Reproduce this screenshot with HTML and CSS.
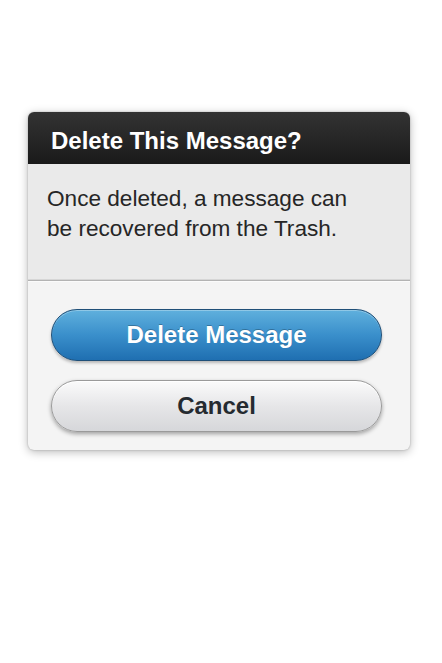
FILE: index.html
```html
<!DOCTYPE html>
<html>
<head>
<meta charset="utf-8">
<link rel="stylesheet" href="styles.css">
</head>
<body>
<div class="dialog">
  <div class="dialog-header">Delete This Message?</div>
  <div class="dialog-body">Once deleted, a message can be recovered from the Trash.</div>
  <div class="dialog-footer">
    <button class="btn btn-primary">Delete Message</button>
    <button class="btn btn-cancel">Cancel</button>
  </div>
</div>
</body>
</html>
```
FILE: styles.css
```css
html, body {
  margin: 0;
  padding: 0;
  background: #ffffff;
  width: 442px;
  height: 663px;
}
body {
  font-family: "Liberation Sans", Arial, sans-serif;
  padding-top: 112px;
  box-sizing: border-box;
}
.dialog {
  margin-left: 28px;
  width: 382px;
  border-radius: 6px;
  overflow: hidden;
  box-shadow: 0 2px 10px rgba(0,0,0,0.28), 0 0 2px rgba(0,0,0,0.25);
  background: #f4f4f4;
}
.dialog-header {
  height: 46px;
  padding-top: 6px;
  line-height: 46px;
  padding-left: 23px;
  font-size: 24px;
  font-weight: bold;
  color: #ffffff;
  background: linear-gradient(#333333, #1a1a1a);
}
.dialog-body {
  height: 96px;
  padding: 20px 50px 0 19px;
  font-size: 22.6px;
  line-height: 30px;
  color: #262626;
  background: #eaeaea;
  border-bottom: 1px solid #b3b3b3;
  box-shadow: inset 0 -1px 0 #d6d6d6;
}
.dialog-footer {
  display: flex;
  flex-direction: column;
  gap: 19px;
  padding: 27px 28px 20px 23px;
  border-top: 1px solid #fbfbfb;
  height: 169px;
  box-sizing: border-box;
}
.btn {
  height: 52px;
  border-radius: 26px;
  font-family: "Liberation Sans", Arial, sans-serif;
  font-size: 24px;
  font-weight: bold;
  line-height: 50px;
  padding: 0;
  width: 331px;
  text-align: center;
}
.btn-primary {
  color: #ffffff;
  background: linear-gradient(#5fb0dd, #3a8fcb 50%, #1f6fb1);
  border: 1px solid #1f4f78;
  box-shadow: 0 2px 3px rgba(0,0,0,0.25), inset 0 1px 0 rgba(255,255,255,0.3);
  text-shadow: 0 -1px 0 rgba(0,0,0,0.25);
}
.btn-cancel {
  color: #252a30;
  background: linear-gradient(#fbfbfb, #e6e6e8 50%, #d6d7da);
  border: 1px solid #9a9a9a;
  box-shadow: 0 2px 4px rgba(0,0,0,0.35), inset 0 1px 0 #ffffff;
}
```
